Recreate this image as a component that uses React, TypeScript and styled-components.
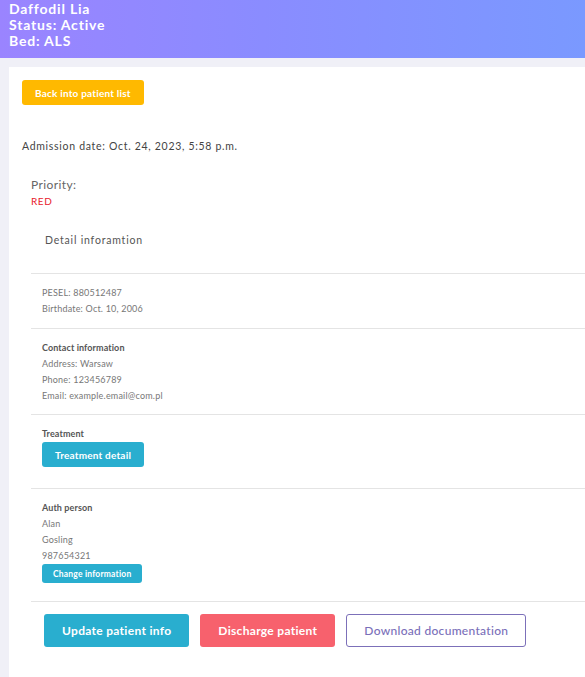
import styled, { createGlobalStyle } from "styled-components";

const GlobalStyle = createGlobalStyle`
  html, body {
    margin: 0;
    padding: 0;
    background: #f0f0f7;
    overflow: hidden;
  }
  body {
    font-family: Lato, "Noto Sans", sans-serif;
  }
  * { box-sizing: border-box; }
`;

const Header = styled.header`
  height: 58px;
  padding: 1px 9px 0;
  background: linear-gradient(90deg, #9a84ff 0%, #8a8cff 45%, #7a99ff 100%);
  color: #fff;
  font-weight: 700;
  font-size: 14px;
  line-height: 16px;
  letter-spacing: 0.8px;
`;

const Page = styled.main`
  padding: 9px 0 0 9px;
`;

const Card = styled.section`
  background: #fff;
  min-height: 620px;
  padding: 13px 0 0 13px;
`;

const Button = styled.button<{ $tone: "yellow" | "blue" | "red" | "outline"; $size?: "sm" | "md" | "lg" }>`
  display: inline-flex;
  align-items: center;
  justify-content: center;
  border-radius: 3px;
  font-family: Lato, "Noto Sans", sans-serif;
  font-weight: 700;
  cursor: pointer;
  border: 1px solid transparent;
  color: #fff;
  letter-spacing: 0.2px;
  background: ${(p) =>
    p.$tone === "yellow" ? "#ffb900" : p.$tone === "blue" ? "#29aecf" : p.$tone === "red" ? "#f7616d" : "#fff"};
  ${(p) => p.$tone === "outline" && "border-color: #7c70b9; color: #7a6fb9; font-weight: 500;"}
  ${(p) =>
    p.$size === "sm"
      ? "height: 19px; padding: 0 10px; font-size: 8.5px;"
      : p.$size === "lg"
      ? "height: 33px; padding: 0 17px; font-size: 12px; letter-spacing: 0.3px;"
      : "height: 25px; padding: 0 12px; font-size: 10px;"}
`;

const Admission = styled.p`
  margin: 34px 0 0;
  font-size: 10.5px;
  line-height: 14px;
  color: #444;
  letter-spacing: 0.7px;
`;

const Details = styled.div`
  padding-left: 9px;
`;

const PriorityLabel = styled.div`
  margin-top: 24px;
  font-size: 12px;
  line-height: 16px;
  color: #666;
  letter-spacing: 0.4px;
`;

const PriorityValue = styled.div`
  margin-top: 1px;
  font-size: 10px;
  line-height: 14px;
  color: #e8212b;
  letter-spacing: 0.6px;
`;

const SectionTitle = styled.h3`
  margin: 25px 0 26px 14px;
  font-size: 10.5px;
  line-height: 14px;
  font-weight: 400;
  color: #555;
  letter-spacing: 0.8px;
`;

const Block = styled.div<{ $pb: number }>`
  border-top: 1px solid #e4e4e4;
  padding: 11px 0 ${(p) => p.$pb}px 11px;
  display: flex;
  flex-direction: column;
  align-items: flex-start;
`;

const Label = styled.div`
  font-size: 9px;
  line-height: 16px;
  font-weight: 700;
  color: #555;
  letter-spacing: 0.1px;
`;

const Value = styled.div`
  font-size: 9px;
  line-height: 16px;
  color: #777;
  letter-spacing: 0.2px;
`;

const Actions = styled.div`
  border-top: 1px solid #e4e4e4;
  padding: 12px 0 0 13px;
  display: flex;
  gap: 11px;
`;

export default function App() {
  return (
    <>
      <GlobalStyle />
      <Header>
        <div>Daffodil Lia</div>
        <div>Status: Active</div>
        <div>Bed: ALS</div>
      </Header>
      <Page>
        <Card>
          <Button $tone="yellow">Back into patient list</Button>
          <Admission>Admission date: Oct. 24, 2023, 5:58 p.m.</Admission>
          <Details>
            <PriorityLabel>Priority:</PriorityLabel>
            <PriorityValue>RED</PriorityValue>
            <SectionTitle>Detail inforamtion</SectionTitle>
            <Block $pb={11}>
              <Value>PESEL: 880512487</Value>
              <Value>Birthdate: Oct. 10, 2006</Value>
            </Block>
            <Block $pb={10}>
              <Label>Contact information</Label>
              <Value>Address: Warsaw</Value>
              <Value>Phone: 123456789</Value>
              <Value>Email: example.email@com.pl</Value>
            </Block>
            <Block $pb={21}>
              <Label>Treatment</Label>
              <Button $tone="blue">Treatment detail</Button>
            </Block>
            <Block $pb={18}>
              <Label>Auth person</Label>
              <Value>Alan</Value>
              <Value>Gosling</Value>
              <Value>987654321</Value>
              <Button $tone="blue" $size="sm">Change information</Button>
            </Block>
            <Actions>
              <Button $tone="blue" $size="lg">Update patient info</Button>
              <Button $tone="red" $size="lg">Discharge patient</Button>
              <Button $tone="outline" $size="lg">Download documentation</Button>
            </Actions>
          </Details>
        </Card>
      </Page>
    </>
  );
}
